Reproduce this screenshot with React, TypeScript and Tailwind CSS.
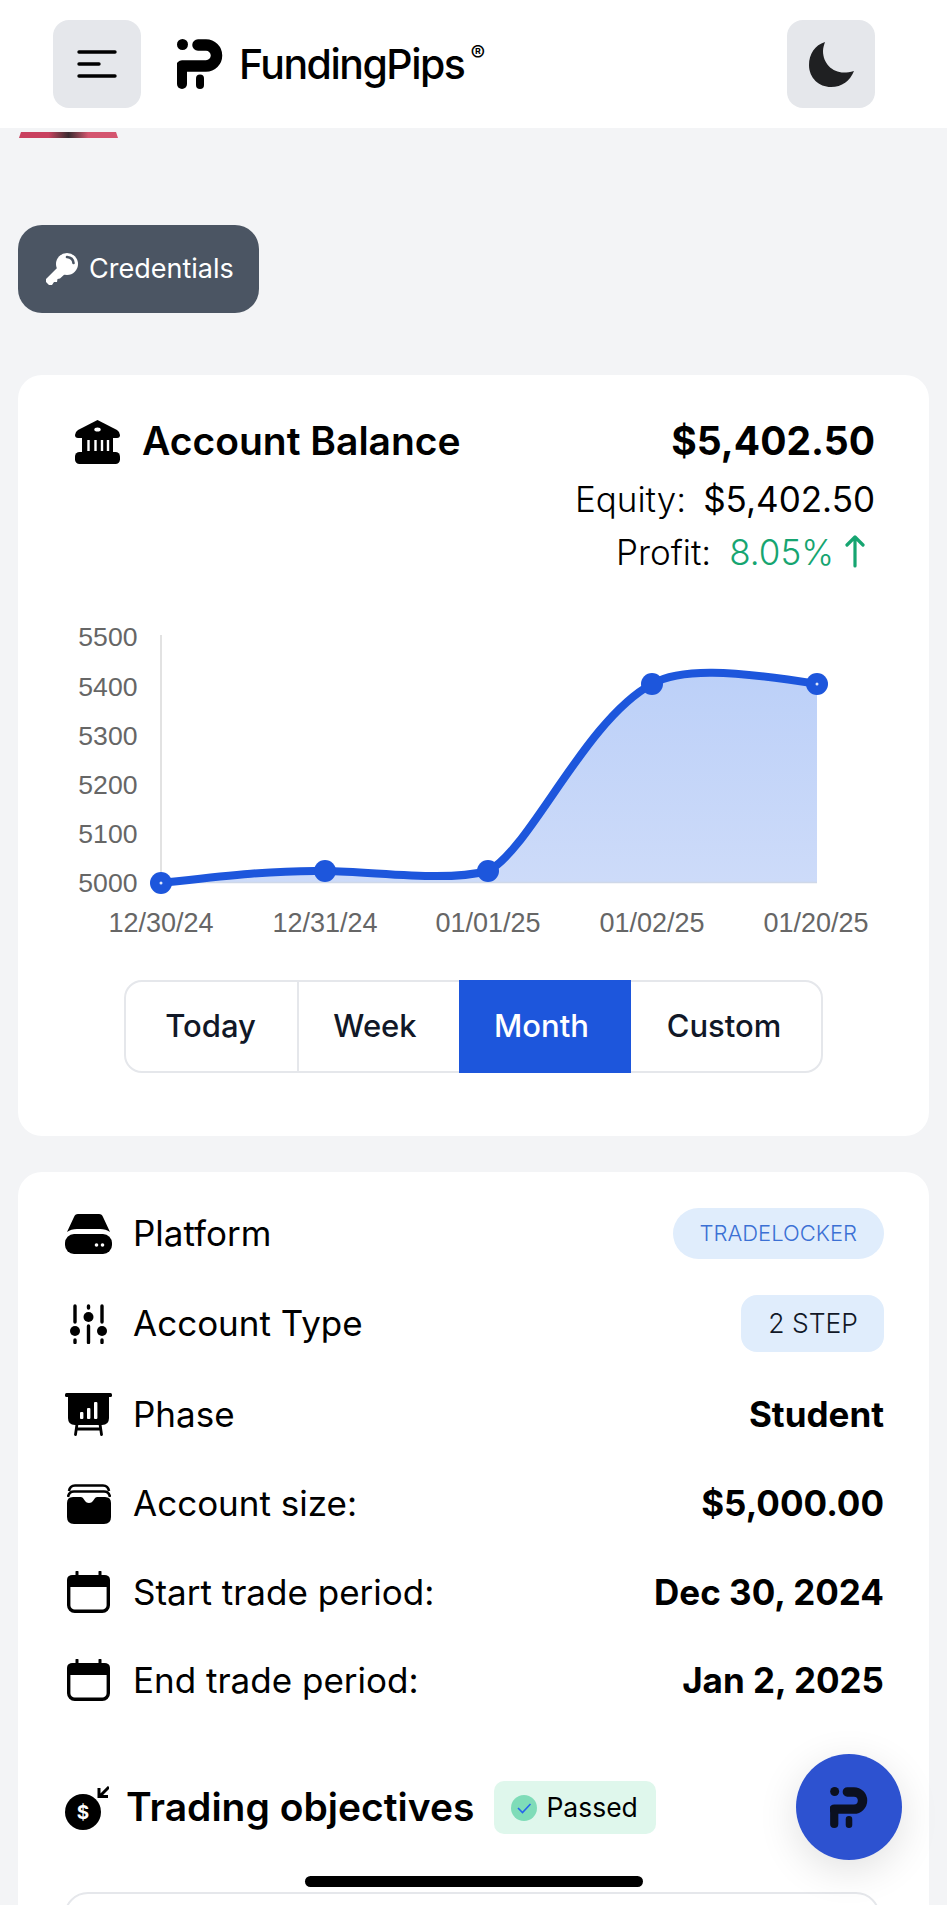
import React from "react";

const Logo = ({ className }: { className: string }) => (
  <svg viewBox="0 0 46 50" className={className} fill="none" stroke="currentColor">
    <circle cx="5.5" cy="5.5" r="5.5" fill="currentColor" stroke="none" />
    <path d="M21 6 H29 A 10.5 10.5 0 0 1 29 27 H5" strokeWidth="11.5" strokeLinecap="round" />
    <path d="M5 27 V45" strokeWidth="10" strokeLinecap="round" />
    <path d="M23 39.5 V46" strokeWidth="8" strokeLinecap="round" />
  </svg>
);

const Bank = () => (
  <svg viewBox="0 0 45 44" className="w-[45px] h-[44px] shrink-0">
    <path d="M22.5 0 L42 10 Q45 12 45 15 Q45 18 42 18 H3 Q0 18 0 15 Q0 12 3 10 Z" fill="#000" />
    <ellipse cx="22.5" cy="9.5" rx="3.2" ry="2" fill="#fff" />
    <path d="M7 18 H38 V34 H7 Z" fill="#000" />
    <path d="M13.5 20 V31 M20.5 20 V31 M27 20 V31 M33 20 V31" stroke="#fff" strokeWidth="2.4" />
    <rect x="0" y="32" width="45" height="12" rx="4.5" fill="#000" />
  </svg>
);

const Platform = () => (
  <svg viewBox="0 0 47 40" className="w-[47px] h-[40px]">
    <path d="M13 0 H34 Q37 0 38 3 L45 18 Q41 15 35 15 H12 Q6 15 2 18 L9 3 Q10 0 13 0 Z" fill="#000" />
    <rect x="0" y="20" width="47" height="20" rx="9" fill="#000" />
    <circle cx="31.5" cy="31" r="1.8" fill="#fff" />
    <circle cx="37.5" cy="31" r="1.8" fill="#fff" />
  </svg>
);

const Sliders = () => (
  <svg viewBox="0 0 37 40" className="w-[37px] h-[40px]" stroke="#000" strokeWidth="3.4" strokeLinecap="round">
    <path d="M5 2 V18 M5 36 V38.5 M18.5 2 V4 M18.5 22 V38.5 M32 2 V18 M32 36 V38.5" />
    <circle cx="5" cy="27" r="5" fill="#000" stroke="none" />
    <circle cx="18.5" cy="13" r="5" fill="#000" stroke="none" />
    <circle cx="32" cy="27" r="5" fill="#000" stroke="none" />
  </svg>
);

const Board = () => (
  <svg viewBox="0 0 47 43" className="w-[47px] h-[43px]">
    <rect x="0" y="0" width="47" height="4" rx="1.5" fill="#000" />
    <path d="M3 3 H44 V25 Q44 32 37 32 H10 Q3 32 3 25 Z" fill="#000" />
    <rect x="15" y="19" width="3.4" height="7" rx="1" fill="#fff" />
    <rect x="22" y="15" width="3.4" height="11" rx="1" fill="#fff" />
    <rect x="29" y="9" width="3.4" height="17" rx="1" fill="#fff" />
    <path d="M12 31 L10.5 41.5 M35 31 L36.5 41.5 M12 36 H35" stroke="#000" strokeWidth="2.8" strokeLinecap="round" fill="none" />
  </svg>
);

const Wallet = () => (
  <svg viewBox="0 0 44 40" className="w-[44px] h-[40px]">
    <path d="M2 7 Q3 1.5 8 1.5 H36 Q41 1.5 42 7" stroke="#000" strokeWidth="2.6" fill="none" />
    <path d="M1 13 Q2 7.5 7 7.5 H37 Q42 7.5 43 13" stroke="#000" strokeWidth="2.6" fill="none" />
    <path d="M6 13 H14 Q16 13 17 15.5 Q19 19 22 19 Q25 19 27 15.5 Q28 13 30 13 H38 Q44 13 44 19 V33 Q44 40 37 40 H7 Q0 40 0 33 V19 Q0 13 6 13 Z" fill="#000" />
  </svg>
);

const Calendar = () => (
  <svg viewBox="0 0 43 42" className="w-[43px] h-[42px]">
    <rect x="1.7" y="5.7" width="39.6" height="34.6" rx="6" fill="#fff" stroke="#000" strokeWidth="3.4" />
    <path d="M0 16 V9 Q0 4 6 4 H37 Q43 4 43 9 V16 Z" fill="#000" />
    <path d="M10 1 V6 M33 1 V6" stroke="#000" strokeWidth="3" strokeLinecap="round" />
  </svg>
);

const Dollar = () => (
  <svg viewBox="0 0 44 44" className="w-[44px] h-[44px] shrink-0">
    <circle cx="18" cy="26" r="18" fill="#000" />
    <text x="18" y="33" textAnchor="middle" fontSize="19" fontWeight="700" fill="#fff" fontFamily="Inter, sans-serif">$</text>
    <path d="M44 1 L35 10 M34 2 V10.5 H43" stroke="#000" strokeWidth="3" fill="none" />
  </svg>
);

const Row = ({ h, icon, label, children }: { h: string; icon: React.ReactNode; label: string; children: React.ReactNode }) => (
  <div className={`flex items-center justify-between ${h}`}>
    <div className="flex items-center">
      <div className="w-[47px] flex justify-center">{icon}</div>
      <span className="ml-[21px] text-[35px] text-black">{label}</span>
    </div>
    {children}
  </div>
);

const Value = ({ children }: { children: React.ReactNode }) => (
  <span className="text-[35px] font-bold text-black">{children}</span>
);

const yLabels = [
  ["5500", 647],
  ["5400", 697],
  ["5300", 746],
  ["5200", 795],
  ["5100", 844],
  ["5000", 893],
] as const;

const xLabels = [
  ["12/30/24", 161],
  ["12/31/24", 325],
  ["01/01/25", 488],
  ["01/02/25", 652],
  ["01/20/25", 816],
] as const;

const points = [
  [161, 884],
  [325, 872],
  [488, 872],
  [652, 685],
  [817, 685],
];

const curve =
  "M161 884 C 215 878 270 871 325 872 C 380 873 445 883 488 872 C 530 851 585 721 652 685 C 680 669 730 671 817 685";

export default function App() {
  return (
    <div className="relative w-[947px] h-[1905px] overflow-hidden bg-[#f3f4f6] font-['Inter',sans-serif]">
      <header className="h-[128px] bg-white flex items-center pl-[53px] pr-[72px]">
        <button className="w-[88px] h-[88px] rounded-2xl bg-[#e5e7eb] flex items-center justify-center">
          <svg viewBox="0 0 40 28" className="w-[40px] h-[28px]" stroke="#000" strokeWidth="3.4" strokeLinecap="round">
            <path d="M2 2 H38 M2 14 H22 M2 26 H38" />
          </svg>
        </button>
        <div className="ml-[36px] flex items-center text-black">
          <Logo className="w-[46px] h-[50px]" />
          <span className="ml-[16px] text-[41px] font-medium tracking-[-1.5px] leading-none">FundingPips</span>
          <span className="ml-[6px] -mt-[22px] text-[22px] font-medium leading-none">®</span>
        </div>
        <button className="ml-auto w-[88px] h-[88px] rounded-2xl bg-[#e5e7eb] flex items-center justify-center">
          <svg viewBox="0 0 45 45" className="w-[45px] h-[45px]">
            <path d="M16 0 C6 3 0 12 0 23 C0 36 10 45 22 45 C33 45 41 39 45 29 C41 30 38 30.5 35 30.5 C23 30.5 14 21 14 9 C14 6 15 3 16 0 Z" fill="#1f2022" />
          </svg>
        </button>
      </header>

      <main className="px-[18px]">
        <div className="mt-[4px] ml-px w-[99px] h-[6px] bg-gradient-to-r from-[#c9405f] from-30% via-[#3a2a30] via-50% to-[#d4556f] to-70% [clip-path:polygon(2%_0,98%_0,100%_100%,0_100%)]" />

        <button className="mt-[87px] w-[241px] h-[88px] rounded-[24px] bg-[#4b5563] flex items-center pl-[28px] text-white">
          <svg viewBox="0 0 32 32" className="w-[32px] h-[32px]">
            <path d="M14 12 L0 26 V29 L3 32 H6 L8 29 L11 29 L11.5 26 L14 25.5 L20 20 Z" fill="#fff" />
            <circle cx="21" cy="11" r="11" fill="#fff" />
            <path d="M21 4 Q27 4.5 27.5 10" stroke="#4b5563" strokeWidth="2.6" fill="none" strokeLinecap="round" />
          </svg>
          <span className="ml-[11px] text-[27px]">Credentials</span>
        </button>

        <section className="mt-[62px] h-[761px] bg-white rounded-[24px] overflow-hidden">
          <div className="pt-[45px] pl-[57px] pr-[54px] flex justify-between items-start">
            <div className="flex items-center">
              <Bank />
              <span className="ml-[22px] -mt-[2px] text-[39px] font-semibold text-black leading-[42px]">Account Balance</span>
            </div>
            <div className="flex flex-col items-end">
              <span className="text-[39px] font-bold text-black leading-[42px]">$5,402.50</span>
              <div className="mt-[16px] text-[35px] font-light text-black leading-[42px]">
                Equity:<span className="ml-[17px] font-normal">$5,402.50</span>
              </div>
              <div className="mt-[11px] flex items-center text-[35px] font-light text-black leading-[42px]">
                Profit:
                <span className="ml-[18px] text-[#16a571]">8.05%</span>
                <svg viewBox="0 0 20 34" className="-mt-[3px] ml-[11px] mr-[10px] w-[20px] h-[34px]" fill="none" stroke="#16a571" strokeWidth="3.2" strokeLinecap="round" strokeLinejoin="round">
                  <path d="M10 32 V3 M2 11 L10 3 L18 11" />
                </svg>
              </div>
            </div>
          </div>

          <svg viewBox="18 620 911 325" className="mt-[46px] block w-[911px] h-[325px]">
            <defs>
              <linearGradient id="area" x1="0" y1="0" x2="0" y2="1">
                <stop offset="0" stopColor="#bcd0f8" />
                <stop offset="1" stopColor="#cddbf9" />
              </linearGradient>
            </defs>
            <path d="M161 636 V884" stroke="#e2e2e2" strokeWidth="2" />
            <path d={`${curve} L817 883 L161 883 Z`} fill="url(#area)" />
            <path d="M161 883.5 H817" stroke="#cfd8e8" strokeWidth="1.5" />
            <path d={curve} fill="none" stroke="#1d56dc" strokeWidth="8" />
            {points.map(([x, y]) => (
              <circle key={x} cx={x} cy={y} r="11" fill="#1d56dc" />
            ))}
            <circle cx="161" cy="884" r="1.5" fill="#dfe7fb" />
            <circle cx="817" cy="685" r="1.5" fill="#dfe7fb" />
            {yLabels.map(([t, y]) => (
              <text key={t} x="137.5" y={y} textAnchor="end" fontSize="26.6" fill="#666" fontFamily="'Liberation Sans', sans-serif">
                {t}
              </text>
            ))}
            {xLabels.map(([t, x]) => (
              <text key={t} x={x} y="933" textAnchor="middle" fontSize="27" fill="#666" fontFamily="'Liberation Sans', sans-serif">
                {t}
              </text>
            ))}
          </svg>

          <div className="mt-[36px] ml-[106px] w-[699px] h-[93px] rounded-[18px] border-2 border-[#e5e7eb] flex items-stretch text-[31px] font-medium text-[#111827] relative">
            <div className="w-[173px] border-r-2 border-[#e5e7eb] flex items-center justify-center pr-[2px]">Today</div>
            <div className="w-[160px] flex items-center justify-center pr-[8px]">Week</div>
            <div className="w-[172px] -my-[2px] bg-[#1d56dc] text-white flex items-center justify-center pr-[7px]">Month</div>
            <div className="flex-1 flex items-center justify-center pr-[4px]">Custom</div>
          </div>
        </section>

        <section className="mt-[36px] h-[800px] bg-white rounded-[24px] pt-[17px] pl-[47px] pr-[45px]">
          <Row h="h-[89px]" icon={<Platform />} label="Platform">
            <span className="h-[51px] px-[27px] rounded-full bg-[#e0edfc] text-[#3b70d4] text-[22px] font-light flex items-center">TRADELOCKER</span>
          </Row>
          <Row h="h-[91px]" icon={<Sliders />} label="Account Type">
            <span className="h-[57px] pl-[27px] pr-[26px] rounded-[16px] bg-[#e0edfc] text-[#111827] text-[26.5px] font-light flex items-center">2 STEP</span>
          </Row>
          <Row h="h-[90px]" icon={<Board />} label="Phase">
            <Value>Student</Value>
          </Row>
          <Row h="h-[89px]" icon={<Wallet />} label="Account size:">
            <Value>$5,000.00</Value>
          </Row>
          <Row h="h-[88px]" icon={<Calendar />} label="Start trade period:">
            <Value>Dec 30, 2024</Value>
          </Row>
          <Row h="h-[88px]" icon={<Calendar />} label="End trade period:">
            <Value>Jan 2, 2025</Value>
          </Row>

          <div className="mt-[57px] h-[53px] flex items-center">
            <Dollar />
            <span className="ml-[17px] text-[39px] font-semibold text-black">Trading objectives</span>
            <div className="ml-[20px] h-[53px] w-[162px] rounded-[10px] bg-[#dff7ec] flex items-center pl-[17px]">
              <svg viewBox="0 0 26 26" className="w-[26px] h-[26px]">
                <circle cx="13" cy="13" r="13" fill="#7fdcb8" />
                <path d="M7 13 L11.5 17.5 L19.5 9" fill="none" stroke="#2563eb" strokeWidth="1.6" />
              </svg>
              <span className="ml-[9px] text-[26.5px] text-black font-normal">Passed</span>
            </div>
          </div>

          <div className="mt-[58px] -ml-[1px] w-[816px] h-[200px] rounded-[24px] border-2 border-[#e5e7eb]" />
        </section>
      </main>

      <button className="absolute left-[796px] top-[1754px] w-[106px] h-[106px] rounded-full bg-[#2d52d0] flex items-center justify-center text-[#0b1020] shadow-[0_10px_40px_rgba(0,0,0,0.12)]">
        <Logo className="w-[38px] h-[41px]" />
      </button>
      <div className="absolute left-[305px] top-[1876px] w-[338px] h-[11px] rounded-full bg-black" />
    </div>
  );
}
